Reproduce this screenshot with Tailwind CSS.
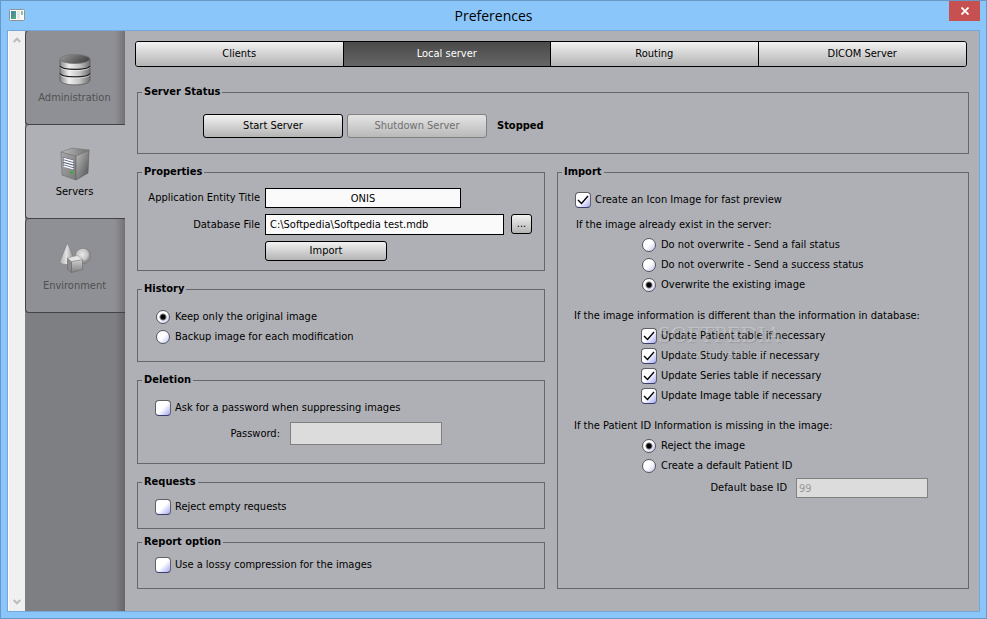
<!DOCTYPE html>
<html lang="en">
    <head>
        <meta charset="UTF-8">
        <meta name="viewport" content="width=device-width, initial-scale=1">
        <title>Preferences</title>
        <script src="https://cdn.jsdelivr.net/npm/@tailwindcss/browser@4"></script>
    </head>
    <body class="min-h-screen flex flex-col bg-[#8bc6fa] border border-[#6898c4] font-['Tahoma','DejaVu_Sans_Condensed','DejaVu_Sans',sans-serif] text-[11px] leading-[14px] text-black">
        <!-- Title bar -->
        <header class="h-[29px] grid grid-cols-[1fr_auto_1fr] items-start px-1.5">
            <svg class="w-4 h-3 mt-2 ml-0.5" viewBox="0 0 16 12" aria-hidden="true">
                <defs>
                    <linearGradient id="app" x1="0" y1="0" x2="1" y2="1"><stop offset="0" stop-color="#3f7fb5"/><stop offset="1" stop-color="#57b06e"/></linearGradient>
                </defs>
                <rect x=".5" y=".5" width="15" height="11" rx="1" fill="#fafafa" stroke="#8d9296"/>
                <rect x="2" y="2" width="5" height="8" fill="url(#app)"/>
                <rect x="8" y="2" width="3" height="8" fill="#e3e6e6"/>
                <rect x="12" y="2" width="2" height="4" fill="#8fc3a4"/>
            </svg>
            <h1 class="font-['Open_Sans',sans-serif] text-[14px] leading-[29px]">Preferences</h1>
            <button type="button" aria-label="Close" class="w-[31px] h-5 justify-self-end flex items-center justify-center bg-[#c75050]">
                <svg class="w-2 h-2" viewBox="0 0 8 8" stroke="#fff" stroke-width="1.8"><path d="M.5 .5l7 7M7.500 .5l-7 7"/></svg>
            </button>
        </header>

        <div class="grow flex mx-1.5 mb-1.5 border border-[#74a8da] bg-[#afb0b5]">
            <!-- Scroll bar -->
            <div class="w-[17px] shrink-0 flex flex-col items-center justify-between py-1.5 bg-[#f0f0f0] border-l border-white">
                <svg class="w-2 h-1.5" viewBox="0 0 8 6" fill="none" stroke="#bcbcbc" stroke-width="2"><path d="M.7 5L4 1.700L7.300 5"/></svg>
                <svg class="w-2 h-1.5" viewBox="0 0 8 6" fill="none" stroke="#bcbcbc" stroke-width="2"><path d="M.7 1L4 4.300L7.300 1"/></svg>
            </div>

            <!-- Side navigation -->
            <nav class="w-[100px] shrink-0 bg-[linear-gradient(to_left,#69666b,#7e7f83_10px)]">
                <a href="#administration" class="h-[94px] flex flex-col items-center pt-[22px] pr-0.5 text-[#505052] border-l border-b border-[#444] rounded-l-sm bg-[linear-gradient(to_left,#737075,#8f9095_10px)]">
                    <svg class="w-8 h-[34px]" viewBox="0 0 32 34" aria-hidden="true">
                        <defs>
                            <linearGradient id="disk"><stop offset="0" stop-color="#888"/><stop offset=".3" stop-color="#efefef"/><stop offset=".65" stop-color="#c4c4c4"/><stop offset="1" stop-color="#707070"/></linearGradient>
                            <linearGradient id="lid" x1="0" y1="0" x2="1" y2=".4"><stop offset="0" stop-color="#9a9a9a"/><stop offset="1" stop-color="#484848"/></linearGradient>
                        </defs>
                        <path d="M1 6v21c0 6.500 30 6.500 30 0V6z" fill="url(#disk)" stroke="#5c5c5c" stroke-width=".8"/>
                        <path d="M1 13c2 4.500 28 4.500 30 0M1 20.500c2 4.500 28 4.500 30 0" fill="none" stroke="#222" stroke-width="1.300"/>
                        <path d="M1 14.300c2 4.500 28 4.500 30 0M1 21.800c2 4.500 28 4.500 30 0" fill="none" stroke="#f4f4f4" stroke-width=".8" opacity=".7"/>
                        <ellipse cx="16" cy="6" rx="15" ry="4.500" fill="url(#lid)" stroke="#777" stroke-width=".8"/>
                    </svg>
                    <span class="mt-1">Administration</span>
                </a>
                <a href="#servers" aria-current="page" class="h-[94px] flex flex-col items-center pt-[22px] pr-0.5 border-l border-b border-[#444] rounded-l-sm bg-[#afb0b5]">
                    <svg class="w-8 h-[34px]" viewBox="0 0 32 34" aria-hidden="true">
                        <defs>
                            <linearGradient id="front" x1="0" y1="0" x2="1" y2="1"><stop offset="0" stop-color="#a8a8a8"/><stop offset="1" stop-color="#7a7a7a"/></linearGradient>
                            <linearGradient id="side" x1="0" y1="0" x2="1" y2="1"><stop offset="0" stop-color="#c0c0c0"/><stop offset="1" stop-color="#4c4c4c"/></linearGradient>
                            <linearGradient id="top"><stop offset="0" stop-color="#bdbdbd"/><stop offset="1" stop-color="#6e6e6e"/></linearGradient>
                        </defs>
                        <path d="M2 5l15 4v24L3 28z" fill="url(#front)" stroke="#6a6a6a" stroke-width=".6"/>
                        <path d="M17 9l13-6-1 23-12 7z" fill="url(#side)" stroke="#5a5a5a" stroke-width=".6"/>
                        <path d="M2 5l11-4 17 2-13 6z" fill="url(#top)" stroke="#777" stroke-width=".6"/>
                        <path d="M4 10l11 3v10L4 19.500z" fill="#59617c"/>
                        <path d="M4.500 11.500l10 2.700M4.500 14l10 2.800M4.500 16.600l10 2.900M4.500 19l10 2.900" stroke="#fff" stroke-width="1.500"/>
                        <circle cx="12.500" cy="25.500" r="1.400" fill="#2fb52f"/>
                    </svg>
                    <span class="mt-1">Servers</span>
                </a>
                <a href="#environment" class="h-[94px] flex flex-col items-center pt-[22px] pr-0.5 text-[#505052] border-l border-b border-[#444] rounded-l-sm bg-[linear-gradient(to_left,#737075,#8f9095_10px)]">
                    <svg class="w-8 h-[34px]" viewBox="0 0 32 34" aria-hidden="true">
                        <defs>
                            <linearGradient id="cone"><stop offset="0" stop-color="#aaa"/><stop offset=".45" stop-color="#e2e2e2"/><stop offset="1" stop-color="#707070"/></linearGradient>
                            <radialGradient id="ball" cx=".45" cy=".4"><stop offset="0" stop-color="#e8e8e8"/><stop offset=".7" stop-color="#c4c4c4"/><stop offset="1" stop-color="#8c8c8c"/></radialGradient>
                            <linearGradient id="cube" x1="0" y1="0" x2="0" y2="1"><stop offset="0" stop-color="#d0d0d0"/><stop offset="1" stop-color="#808080"/></linearGradient>
                        </defs>
                        <path d="M8.500 2L.5 21c1.500 3.500 14 3.500 16 0z" fill="url(#cone)" stroke="#777" stroke-width=".6"/>
                        <circle cx="24" cy="15" r="7.800" fill="url(#ball)" stroke="#777" stroke-width=".6"/>
                        <path d="M8.500 17l4 3.500v11l-4-3z" fill="#8c8c8c" stroke="#666" stroke-width=".6"/>
                        <path d="M12.500 20.500l11-2v10l-11 3z" fill="url(#cube)" stroke="#666" stroke-width=".6"/>
                        <path d="M8.500 17l10-2.500 5 4-11 2z" fill="#e4e4e4" stroke="#999" stroke-width=".6"/>
                    </svg>
                    <span class="mt-1">Environment</span>
                </a>
            </nav>

            <main class="grow min-w-0 pt-2.5 pb-5">
                <div class="ml-2.5 mr-3 h-[26px] grid grid-cols-4 divide-x divide-black border border-black rounded-[3px] overflow-hidden">
                    <button type="button" class="bg-linear-to-b from-[#f2f2f2] to-[#b4b4b4]">Clients</button>
                    <button type="button" class="bg-linear-to-b from-[#4a4a4a] to-[#666] text-white">Local server</button>
                    <button type="button" class="bg-linear-to-b from-[#f2f2f2] to-[#b4b4b4]">Routing</button>
                    <button type="button" class="bg-linear-to-b from-[#f2f2f2] to-[#b4b4b4]">DICOM Server</button>
                </div>

                <div class="ml-3 mr-2.5 mt-[18px]">
                    <fieldset class="border border-[#66676b] px-1 pt-[15px] pb-[15px]">
                        <legend class="px-0.5 font-bold">Server Status</legend>
                        <div class="flex items-center gap-1 pl-[61px]">
                            <button type="button" class="w-[140px] h-6 border border-black rounded-[3px] bg-linear-to-b from-[#f2f2f2] to-[#b4b4b4]">Start Server</button>
                            <button type="button" disabled class="w-[140px] h-6 border border-[#808080] rounded-[3px] bg-linear-to-b from-[#e4e4e4] to-[#b9b9b9] text-[#707070]">Shutdown Server</button>
                            <span class="ml-1.5 font-bold">Stopped</span>
                        </div>
                    </fieldset>

                    <div class="grid grid-cols-[408fr_412fr] gap-3 mt-[11px]">
                        <div class="flex flex-col gap-[11px]">
                            <fieldset class="border border-[#66676b] px-1 pt-[9px] pb-[9px]">
                                <legend class="px-0.5 font-bold">Properties</legend>
                                <div class="grid grid-cols-[118px_auto] justify-start items-center gap-x-[5px] gap-y-1.5">
                                    <label for="aet" class="text-right">Application Entity Title</label>
                                    <input id="aet" type="text" value="ONIS" class="w-[196px] h-5 border border-black bg-[#fafafa] text-center">
                                    <label for="dbfile" class="text-right">Database File</label>
                                    <div class="flex gap-[7px]">
                                        <input id="dbfile" type="text" value="C:\Softpedia\Softpedia test.mdb" class="w-[239px] h-[21px] px-1 border border-black bg-[#fafafa]">
                                        <button type="button" aria-label="Browse" class="w-[21px] h-5 border border-black rounded-[3px] bg-linear-to-b from-[#f2f2f2] to-[#b4b4b4]">...</button>
                                    </div>
                                    <button type="button" class="col-start-2 w-[122px] h-5 border border-black rounded-[3px] bg-linear-to-b from-[#f2f2f2] to-[#b4b4b4]">Import</button>
                                </div>
                            </fieldset>

                            <fieldset class="border border-[#66676b] px-1 pt-[11px] pb-3.5">
                                <legend class="px-0.5 font-bold">History</legend>
                                <label class="h-5 flex items-center gap-[5px] pl-3.5">
                                    <input type="radio" name="history" checked class="appearance-none size-3.5 rounded-full border border-[#55565c] bg-linear-to-br from-white from-50% to-[#c4c4f0] checked:bg-[radial-gradient(circle,#000_2px,transparent_4px),linear-gradient(135deg,#fff_50%,#c4c4f0)]">
                                    Keep only the original image
                                </label>
                                <label class="h-5 flex items-center gap-[5px] pl-3.5">
                                    <input type="radio" name="history" class="appearance-none size-3.5 rounded-full border border-[#55565c] bg-linear-to-br from-white from-50% to-[#c4c4f0] checked:bg-[radial-gradient(circle,#000_2px,transparent_4px),linear-gradient(135deg,#fff_50%,#c4c4f0)]">
                                    Backup image for each modification
                                </label>
                            </fieldset>

                            <fieldset class="border border-[#66676b] px-1 pt-[11px] pb-[18px]">
                                <legend class="px-0.5 font-bold">Deletion</legend>
                                <label class="h-5 flex items-center gap-1 pl-[13px]">
                                    <span class="grid">
                                        <input type="checkbox" class="peer col-start-1 row-start-1 appearance-none size-4 rounded-[4px] border border-[#606064] border-b-[#3c3c6c] bg-linear-to-br from-white from-50% to-[#a8a8f0]">
                                        <svg class="hidden peer-checked:block col-start-1 row-start-1 size-4 pointer-events-none" viewBox="0 0 16 16" fill="none" stroke="#000" stroke-width="1.400"><path d="M3 8l3.500 3.500L13 4"/></svg>
                                    </span>
                                    Ask for a password when suppressing images
                                </label>
                                <div class="flex items-center mt-1 gap-2.5">
                                    <label for="password" class="w-[138px] text-right">Password:</label>
                                    <input id="password" type="password" disabled class="w-[152px] h-[23px] border border-[#808080] bg-[#dcdcdc]">
                                </div>
                            </fieldset>

                            <fieldset class="border border-[#66676b] px-1 pt-2 pb-[11px]">
                                <legend class="px-0.5 font-bold">Requests</legend>
                                <label class="h-5 flex items-center gap-1 pl-[13px]">
                                    <span class="grid">
                                        <input type="checkbox" class="peer col-start-1 row-start-1 appearance-none size-4 rounded-[4px] border border-[#606064] border-b-[#3c3c6c] bg-linear-to-br from-white from-50% to-[#a8a8f0]">
                                        <svg class="hidden peer-checked:block col-start-1 row-start-1 size-4 pointer-events-none" viewBox="0 0 16 16" fill="none" stroke="#000" stroke-width="1.400"><path d="M3 8l3.500 3.500L13 4"/></svg>
                                    </span>
                                    Reject empty requests
                                </label>
                            </fieldset>

                            <fieldset class="-mt-[5px] border border-[#66676b] px-1 pt-1.5 pb-[13px]">
                                <legend class="px-0.5 font-bold">Report option</legend>
                                <label class="h-5 flex items-center gap-1 pl-[13px]">
                                    <span class="grid">
                                        <input type="checkbox" class="peer col-start-1 row-start-1 appearance-none size-4 rounded-[4px] border border-[#606064] border-b-[#3c3c6c] bg-linear-to-br from-white from-50% to-[#a8a8f0]">
                                        <svg class="hidden peer-checked:block col-start-1 row-start-1 size-4 pointer-events-none" viewBox="0 0 16 16" fill="none" stroke="#000" stroke-width="1.400"><path d="M3 8l3.500 3.500L13 4"/></svg>
                                    </span>
                                    Use a lossy compression for the images
                                </label>
                            </fieldset>
                        </div>

                        <fieldset class="border border-[#66676b] px-1 pt-[11px]">
                            <legend class="px-0.5 font-bold">Import</legend>
                            <label class="h-5 flex items-center gap-1 pl-[13px]">
                                <span class="grid">
                                    <input type="checkbox" checked class="peer col-start-1 row-start-1 appearance-none size-4 rounded-[4px] border border-[#606064] border-b-[#3c3c6c] bg-linear-to-br from-white from-50% to-[#a8a8f0]">
                                    <svg class="hidden peer-checked:block col-start-1 row-start-1 size-4 pointer-events-none" viewBox="0 0 16 16" fill="none" stroke="#000" stroke-width="1.400"><path d="M3 8l3.500 3.500L13 4"/></svg>
                                </span>
                                Create an Icon Image for fast preview
                            </label>

                            <p class="mt-[5px] pl-3.5 leading-5">If the image already exist in the server:</p>
                            <div class="pl-20">
                                <label class="h-5 flex items-center gap-[5px]">
                                    <input type="radio" name="exists" class="appearance-none size-3.5 rounded-full border border-[#55565c] bg-linear-to-br from-white from-50% to-[#c4c4f0] checked:bg-[radial-gradient(circle,#000_2px,transparent_4px),linear-gradient(135deg,#fff_50%,#c4c4f0)]">
                                    Do not overwrite - Send a fail status
                                </label>
                                <label class="h-5 flex items-center gap-[5px]">
                                    <input type="radio" name="exists" class="appearance-none size-3.5 rounded-full border border-[#55565c] bg-linear-to-br from-white from-50% to-[#c4c4f0] checked:bg-[radial-gradient(circle,#000_2px,transparent_4px),linear-gradient(135deg,#fff_50%,#c4c4f0)]">
                                    Do not overwrite - Send a success status
                                </label>
                                <label class="h-5 flex items-center gap-[5px]">
                                    <input type="radio" name="exists" checked class="appearance-none size-3.5 rounded-full border border-[#55565c] bg-linear-to-br from-white from-50% to-[#c4c4f0] checked:bg-[radial-gradient(circle,#000_2px,transparent_4px),linear-gradient(135deg,#fff_50%,#c4c4f0)]">
                                    Overwrite the existing image
                                </label>
                            </div>

                            <p class="mt-[11px] pl-3 leading-5">If the image information is different than the information in database:</p>
                            <div class="relative pl-[79px]">
                                <label class="h-5 flex items-center gap-1">
                                    <span class="grid">
                                        <input type="checkbox" checked class="peer col-start-1 row-start-1 appearance-none size-4 rounded-[4px] border border-[#606064] border-b-[#3c3c6c] bg-linear-to-br from-white from-50% to-[#a8a8f0]">
                                        <svg class="hidden peer-checked:block col-start-1 row-start-1 size-4 pointer-events-none" viewBox="0 0 16 16" fill="none" stroke="#000" stroke-width="1.400"><path d="M3 8l3.500 3.500L13 4"/></svg>
                                    </span>
                                    Update Patient table if necessary
                                </label>
                                <label class="h-5 flex items-center gap-1">
                                    <span class="grid">
                                        <input type="checkbox" checked class="peer col-start-1 row-start-1 appearance-none size-4 rounded-[4px] border border-[#606064] border-b-[#3c3c6c] bg-linear-to-br from-white from-50% to-[#a8a8f0]">
                                        <svg class="hidden peer-checked:block col-start-1 row-start-1 size-4 pointer-events-none" viewBox="0 0 16 16" fill="none" stroke="#000" stroke-width="1.400"><path d="M3 8l3.500 3.500L13 4"/></svg>
                                    </span>
                                    Update Study table if necessary
                                </label>
                                <label class="h-5 flex items-center gap-1">
                                    <span class="grid">
                                        <input type="checkbox" checked class="peer col-start-1 row-start-1 appearance-none size-4 rounded-[4px] border border-[#606064] border-b-[#3c3c6c] bg-linear-to-br from-white from-50% to-[#a8a8f0]">
                                        <svg class="hidden peer-checked:block col-start-1 row-start-1 size-4 pointer-events-none" viewBox="0 0 16 16" fill="none" stroke="#000" stroke-width="1.400"><path d="M3 8l3.500 3.500L13 4"/></svg>
                                    </span>
                                    Update Series table if necessary
                                </label>
                                <label class="h-5 flex items-center gap-1">
                                    <span class="grid">
                                        <input type="checkbox" checked class="peer col-start-1 row-start-1 appearance-none size-4 rounded-[4px] border border-[#606064] border-b-[#3c3c6c] bg-linear-to-br from-white from-50% to-[#a8a8f0]">
                                        <svg class="hidden peer-checked:block col-start-1 row-start-1 size-4 pointer-events-none" viewBox="0 0 16 16" fill="none" stroke="#000" stroke-width="1.400"><path d="M3 8l3.500 3.500L13 4"/></svg>
                                    </span>
                                    Update Image table if necessary
                                </label>
                                <!-- Watermark -->
                                <div class="absolute left-24 -top-1 pointer-events-none text-center text-white/30 [text-shadow:1px_1px_1px_rgb(0_0_0/0.12)]">
                                    <div class="font-['Liberation_Serif',serif] text-[23px] leading-[26px] whitespace-nowrap">SOFTPEDIA<sup class="text-[8px]">™</sup></div>
                                    <div class="font-['Liberation_Sans',sans-serif] text-[10px]">www.softpedia.com</div>
                                </div>
                            </div>

                            <p class="mt-2.5 pl-3 leading-5">If the Patient ID Information is missing in the image:</p>
                            <div class="pl-20">
                                <label class="h-5 flex items-center gap-[5px]">
                                    <input type="radio" name="missing" checked class="appearance-none size-3.5 rounded-full border border-[#55565c] bg-linear-to-br from-white from-50% to-[#c4c4f0] checked:bg-[radial-gradient(circle,#000_2px,transparent_4px),linear-gradient(135deg,#fff_50%,#c4c4f0)]">
                                    Reject the image
                                </label>
                                <label class="h-5 flex items-center gap-[5px]">
                                    <input type="radio" name="missing" class="appearance-none size-3.5 rounded-full border border-[#55565c] bg-linear-to-br from-white from-50% to-[#c4c4f0] checked:bg-[radial-gradient(circle,#000_2px,transparent_4px),linear-gradient(135deg,#fff_50%,#c4c4f0)]">
                                    Create a default Patient ID
                                </label>
                            </div>
                            <div class="flex items-center mt-0.5 gap-[9px]">
                                <label for="baseid" class="w-[225px] text-right">Default base ID</label>
                                <input id="baseid" type="text" value="99" disabled class="w-[132px] h-5 px-0.5 border border-[#808080] bg-[#dcdcdc] text-[#999]">
                            </div>
                        </fieldset>
                    </div>
                </div>
            </main>
        </div>
    </body>
</html>
